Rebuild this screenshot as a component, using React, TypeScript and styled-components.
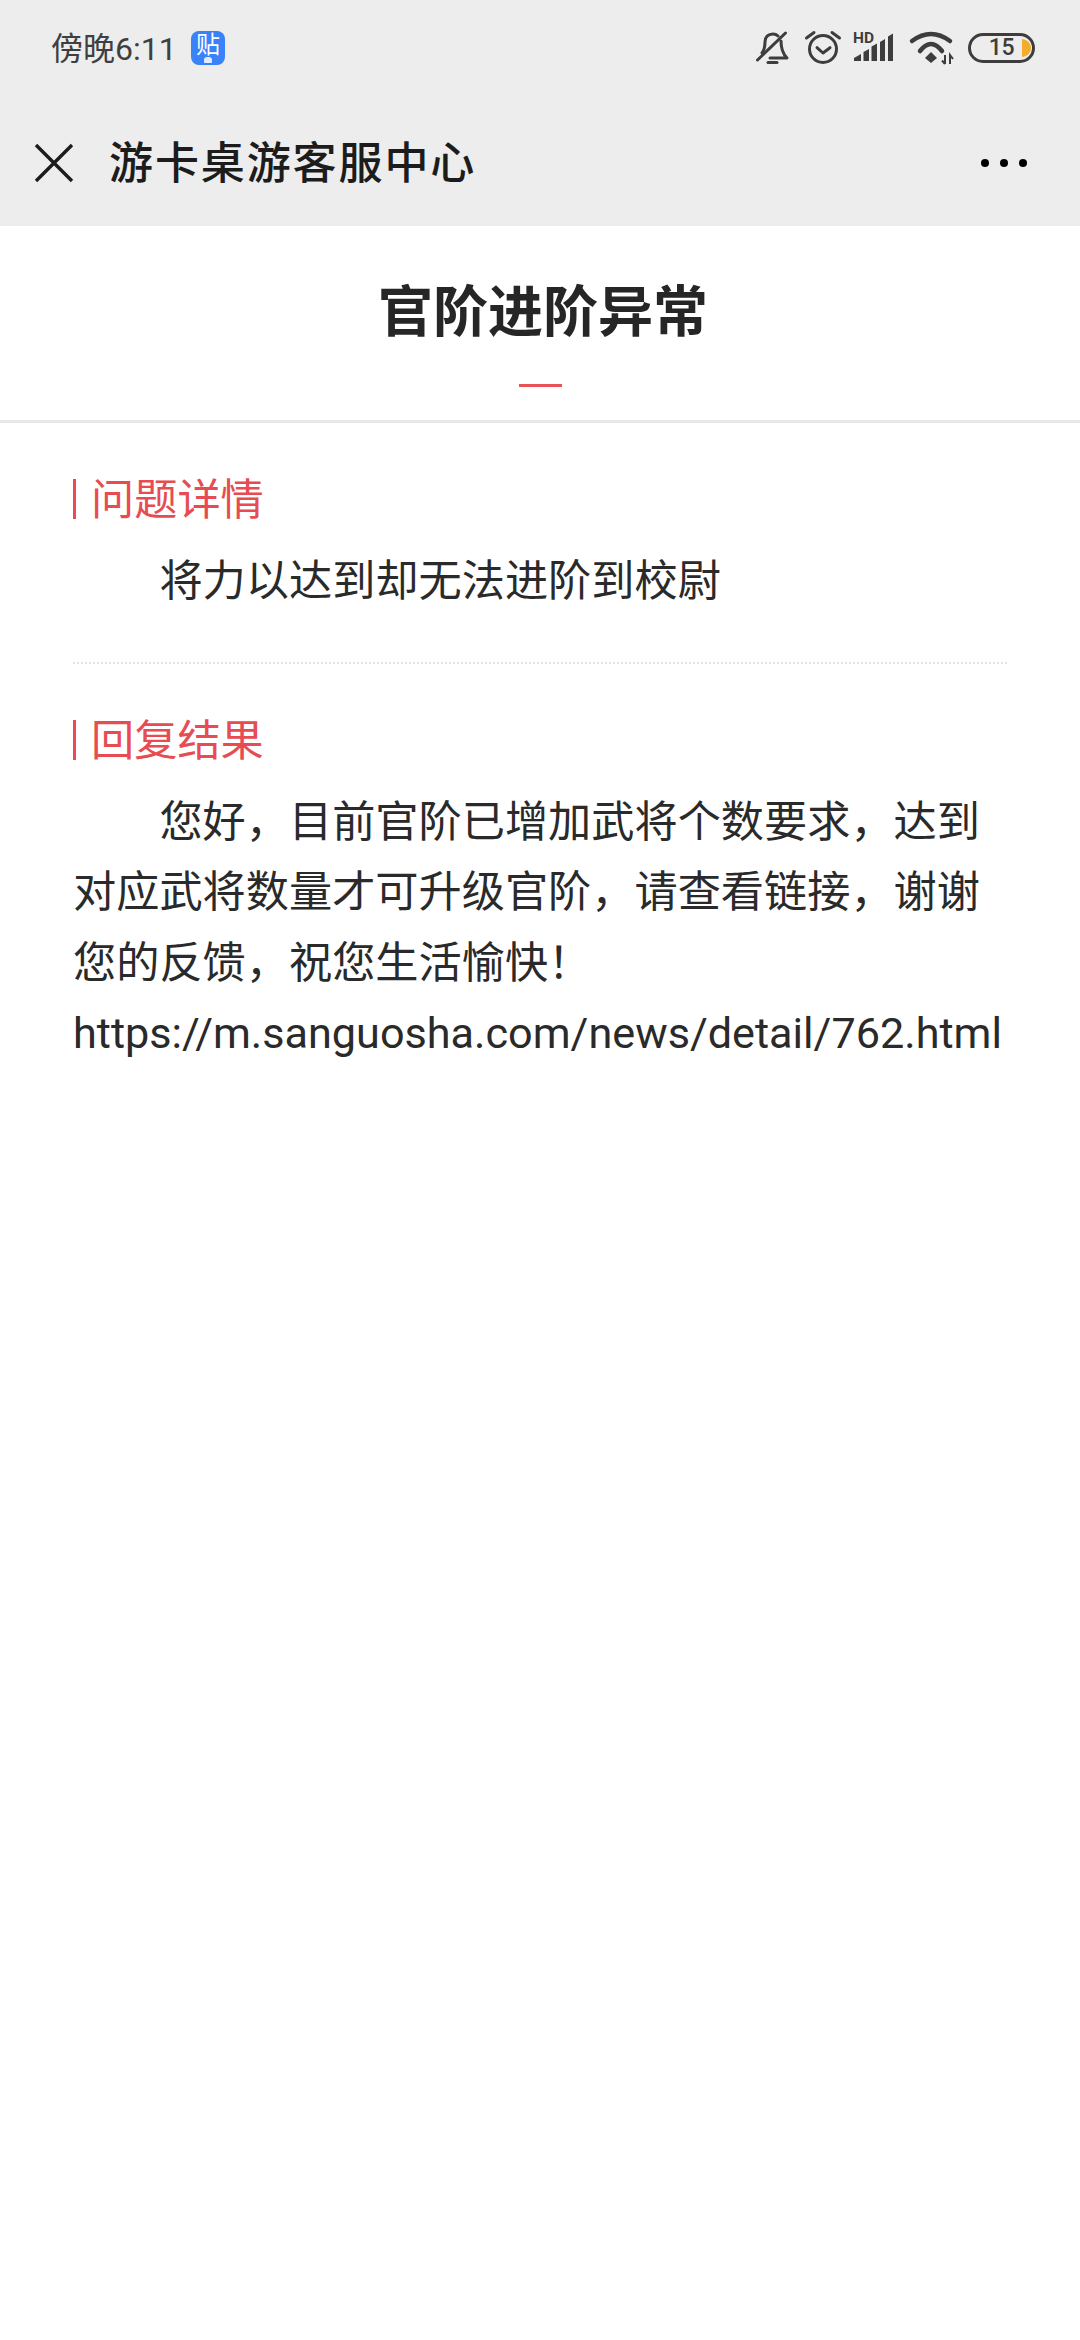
import React from "react";
import styled, { createGlobalStyle } from "styled-components";

const Global = createGlobalStyle`
  html, body { margin: 0; padding: 0; background: #fff; }
  body { font-family: Roboto, "Noto Sans CJK SC", sans-serif; }
  * { box-sizing: border-box; }
`;
const Page = styled.div`width: 1080px; height: 2340px; background: #fff; overflow: hidden;`;
const Chrome = styled.header`background: #ededed; height: 226px;`;
const StatusBar = styled.div`height: 96px; display: flex; align-items: center; justify-content: space-between; padding: 0 45px 0 51px;`;
const StatusLeft = styled.div`display: flex; align-items: center; gap: 15px;`;
const Clock = styled.span`font-size: 32px; line-height: 40px; padding-top: 2px; color: #3f3f3f; width: 125px; white-space: nowrap;`;
const Badge = styled.span`position: relative; width: 34px; height: 34px; border-radius: 8px; background: #3a82f7; color: #fff; font-size: 24px; line-height: 28px; text-align: center;`;
const BadgeMark = styled.i`position: absolute; left: 13px; bottom: 2px; width: 8px; height: 6px; border-radius: 3px 3px 1px 1px; background: #dfeaff;`;
const StatusIcons = styled.div`display: flex; align-items: center;`;
const IconSlot = styled.svg<{ $ml: number }>`display: block; margin-left: ${p => p.$ml}px; flex: none; overflow: visible;`;
const BatteryShell = styled.div`margin-left: 15px; width: 67px; height: 30px; border: 3.5px solid #3d3d3d; border-radius: 15px; display: flex; align-items: center; justify-content: flex-end; gap: 8px; padding-right: 1px;`;
const BatteryNum = styled.span`font-size: 23px; line-height: 22px; font-weight: 500; color: #3d3d3d; letter-spacing: -0.5px;`;
const BatteryFill = styled.i`width: 9px; height: 18px; background: #f3ac2c; border-radius: 0 9px 9px 0;`;
const NavBar = styled.nav`height: 130px; display: flex; align-items: center; padding: 4px 53px 0 34px;`;
const NavTitle = styled.h2`margin: 0 0 6px 35px; flex: 1; font-size: 44px; line-height: 50px; font-weight: 500; letter-spacing: 1.9px; color: #1c1c1c; font-family: "Noto Sans CJK SC", sans-serif;`;
const Dots = styled.div`display: flex; gap: 11px;`;
const Dot = styled.i`width: 8px; height: 8px; border-radius: 50%; background: #000;`;
const Header = styled.div`height: 197px; border-bottom: 3px solid #e8e8e8; display: flex; flex-direction: column; align-items: center; padding-top: 45px;`;
const Title = styled.h1`margin: 0 0 0 6px; font-size: 55px; line-height: 72px; font-weight: 700; color: #262626; font-family: "Noto Sans CJK SC", sans-serif;`;
const TitleRule = styled.i`display: block; width: 43px; height: 3px; background: #e8535a; margin-top: 41px;`;
const Content = styled.main`padding: 48px 73px 0;`;
const Section = styled.section<{ $divided?: boolean }>`
  padding-bottom: ${p => (p.$divided ? "44px" : "0")};
  margin-bottom: ${p => (p.$divided ? "48px" : "0")};
  border-bottom: ${p => (p.$divided ? "2px dotted #e2e2e2" : "none")};
`;
const SectionTitle = styled.h3`margin: 0; height: 50px; display: flex; align-items: center; gap: 15px; font-size: 43.2px; line-height: 50px; font-weight: 400; color: #e64c52; font-family: "Noto Sans CJK SC", sans-serif;
  &::before { content: ""; width: 3px; height: 40px; background: #e64c52; flex: none; margin-top: 6px; }
`;
const Body = styled.p`margin: 26px 0 0; font-size: 43.2px; line-height: 70.6px; color: #2a2a2a; text-indent: 86.4px; word-break: break-all;`;
const Url = styled.span`display: block; text-indent: 0; white-space: nowrap;`;

export default function App() {
  return (
    <Page>
      <Global />
      <Chrome>
        <StatusBar>
          <StatusLeft>
            <Clock>傍晚6:11</Clock>
            <Badge>贴<BadgeMark /></Badge>
          </StatusLeft>
          <StatusIcons>
            <IconSlot $ml={0} width="33" height="34" viewBox="0 0 33 34" fill="none" stroke="#3d3d3d" strokeWidth="3" strokeLinecap="round" strokeLinejoin="round">
              <path d="M5 22C8 18 8 14 8 11C8 6 11 3 16 3C18 3 19.500 3.500 21 5" />
              <path d="M24 10C24 16 25 22 30 27H13" />
              <path d="M0.500 29L28.500 2" />
              <path d="M11 31.500H20" />
            </IconSlot>
            <IconSlot $ml={15} width="36" height="34" viewBox="0 0 36 34" fill="none" stroke="#3d3d3d" strokeWidth="3" strokeLinecap="round" strokeLinejoin="round">
              <circle cx="18" cy="18" r="13.500" />
              <path d="M12 16.700L18 22L25 16.700" />
              <path d="M1.500 7L9 1.500M34.500 7L27 1.500" />
            </IconSlot>
            <IconSlot $ml={12} width="42" height="32" viewBox="0 0 42 32">
              <text x="0" y="10.500" fontFamily="Roboto, sans-serif" fontWeight="700" fontSize="15.500" fill="#3d3d3d">HD</text>
              <path d="M1 29V26L8 22V29ZM10.500 29V20L16 17V29ZM18.500 29V14.500L24 11.500V29ZM27 29V10L32 7V29ZM35 29V4.500L40 1.500V29Z" fill="#3d3d3d" />
            </IconSlot>
            <IconSlot $ml={14} width="44" height="34" viewBox="0 0 44 34" fill="none">
              <path d="M3 10Q22 -4 41 10" stroke="#3d3d3d" strokeWidth="4.500" strokeLinecap="round" />
              <path d="M11 20Q22 6 33 20" stroke="#3d3d3d" strokeWidth="4.500" strokeLinecap="round" />
              <path d="M22 21L28 27L22 32L16 27Z" fill="#3d3d3d" />
              <path d="M36 33V24M33 29.500L36 33M41 33V24L44 28" stroke="#3d3d3d" strokeWidth="2" />
            </IconSlot>
            <BatteryShell>
              <BatteryNum>15</BatteryNum>
              <BatteryFill />
            </BatteryShell>
          </StatusIcons>
        </StatusBar>
        <NavBar>
          <svg width="40" height="40" viewBox="0 0 40 40" fill="none" stroke="#1c1c1c" strokeWidth="3.400">
            <path d="M2 2L38 38M38 2L2 38" />
          </svg>
          <NavTitle>游卡桌游客服中心</NavTitle>
          <Dots><Dot /><Dot /><Dot /></Dots>
        </NavBar>
      </Chrome>
      <Header>
        <Title>官阶进阶异常</Title>
        <TitleRule />
      </Header>
      <Content>
        <Section $divided>
          <SectionTitle>问题详情</SectionTitle>
          <Body>将力以达到却无法进阶到校尉</Body>
        </Section>
        <Section>
          <SectionTitle>回复结果</SectionTitle>
          <Body>
            您好，目前官阶已增加武将个数要求，达到对应武将数量才可升级官阶，请查看链接，谢谢您的反馈，祝您生活愉快！
            <Url>https://m.sanguosha.com/news/detail/762.html</Url>
          </Body>
        </Section>
      </Content>
    </Page>
  );
}
